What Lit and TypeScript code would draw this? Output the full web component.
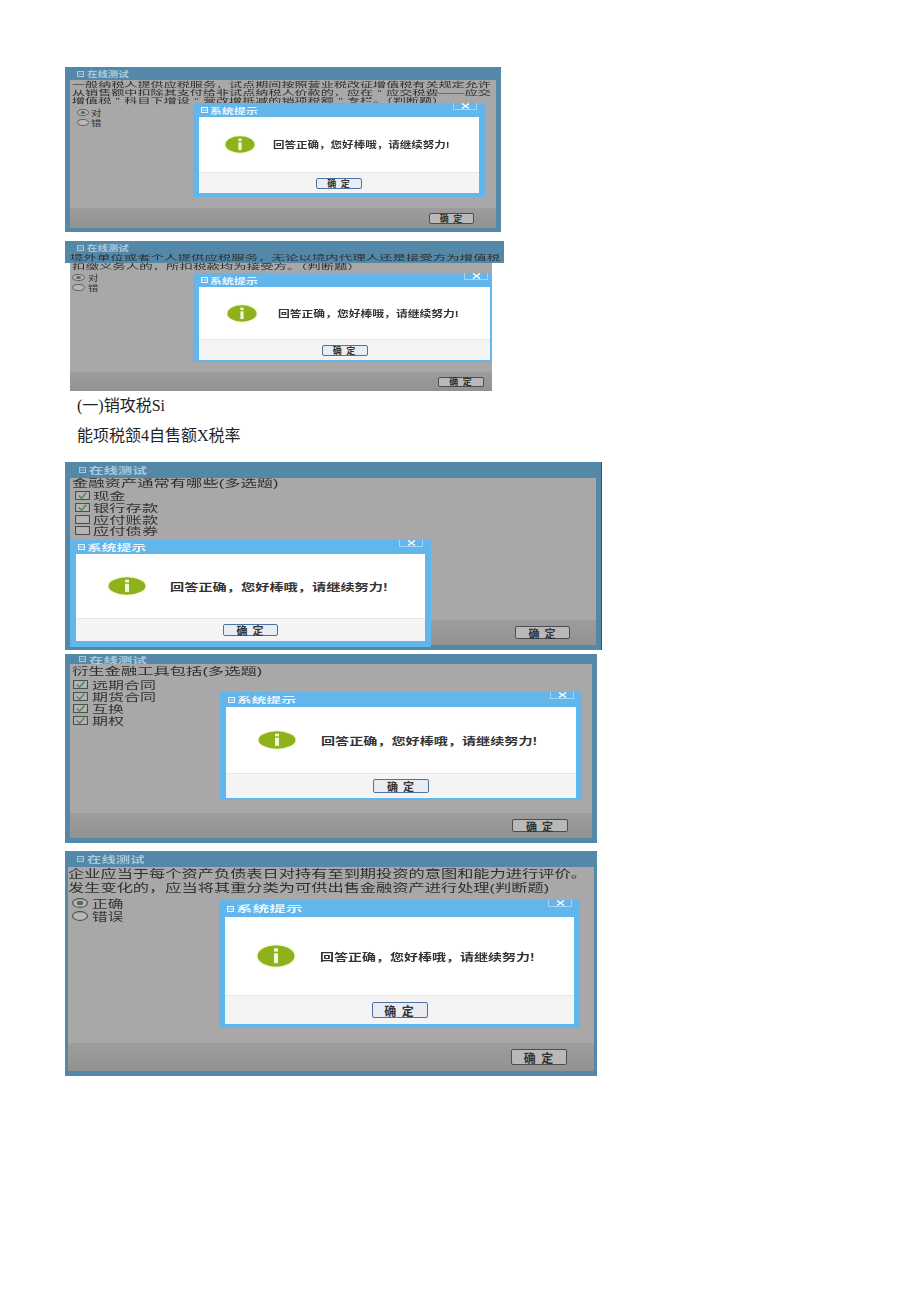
import { LitElement, html, svg, css } from "lit";
import { customElement } from "lit/decorators.js";

type Opt = { label: string; on: boolean };
type Shot = { cls: string; lines: string[]; kind: "radio" | "check"; opts: Opt[] };

const MSG = "回答正确，您好棒哦，请继续努力!";

const shots: Shot[] = [
  {
    cls: "s1",
    lines: [
      "一般纳税人提供应税服务，试点期间按照营业税改征增值税有关规定允许",
      "从销售额中扣除其支付给非试点纳税人价款的，应在“应交税费——应交",
      "增值税”科目下增设“营改增抵减的销项税额”专栏。（判断题）",
    ],
    kind: "radio",
    opts: [{ label: "对", on: true }, { label: "错", on: false }],
  },
  {
    cls: "s3",
    lines: ["金融资产通常有哪些(多选题)"],
    kind: "check",
    opts: [
      { label: "现金", on: true },
      { label: "银行存款", on: true },
      { label: "应付账款", on: false },
      { label: "应付债券", on: false },
    ],
  },
  {
    cls: "s4",
    lines: ["衍生金融工具包括(多选题)"],
    kind: "check",
    opts: [
      { label: "远期合同", on: true },
      { label: "期货合同", on: true },
      { label: "互换", on: true },
      { label: "期权", on: true },
    ],
  },
  {
    cls: "s5",
    lines: [
      "企业应当于每个资产负债表日对持有至到期投资的意图和能力进行评价。",
      "发生变化的，应当将其重分类为可供出售金融资产进行处理(判断题)",
    ],
    kind: "radio",
    opts: [{ label: "正确", on: true }, { label: "错误", on: false }],
  },
];

@customElement("app-root")
export class AppRoot extends LitElement {
  static styles = css`
    :host {
      display: block;
      width: 920px;
      min-height: 1301px;
      background: #fff;
      font-family: "Liberation Sans", "Noto Sans CJK SC", sans-serif;
      color: #2b2b2b;
    }
    .page {
      display: flex;
      flex-direction: column;
      align-items: flex-start;
      padding: 67px 0 0 65px;
    }
    .win {
      position: relative;
      box-sizing: border-box;
      display: flex;
      flex-direction: column;
      width: var(--w);
      height: var(--h);
      margin-top: var(--mt, 0);
      padding: 0 var(--side) var(--bot);
      background: #5488a9;
      filter: blur(0.7px);
    }
    .s1 { --w: 436px; --h: 165px; --side: 5px; --bot: 4px; --title: 13px; --tpl: 7px; --tfs: 8px; --tsx: 1.3; --dtsx: 1.5; --qfs: 7px; --qlh: 8.1px; --qsx: 1.87; --qpt: 1px; --mpl: 2px; --ofs: 8.5px; --olh: 10px; --osx: 1.22; --ctlw: 12px; --ctlh: 7px; --opl: 5px; --gap: 2px; --optop: 2px; --foot: 20px; --btnr: 22px; --bw: 45px; --bh: 11px; --bfs: 9px; --dl: 128px; --dt: 36px; --dw: 292px; --dh: 94px; --dside: 6px; --dtitle: 14px; --dbot: 4px; --dfoot: 21px; --dbw: 46px; --dbh: 11px; --ipl: 26px; --iw: 30px; --ih: 17px; --mgap: 18px; --mfs: 9px; --msx: 1.28; }
    .s3 { --w: 537px; --h: 188px; --side: 5px; --bot: 5px; --title: 16px; --tpl: 9px; --tfs: 9px; --tsx: 1.6; --dtsx: 1.65; --qfs: 10px; --qlh: 12px; --qsx: 1.63; --qpt: 0px; --mpl: 2px; --ofs: 10px; --olh: 11.7px; --osx: 1.63; --ctlw: 15px; --ctlh: 9px; --opl: 3px; --gap: 3px; --optop: 0px; --foot: 25px; --btnr: 26px; --bw: 55px; --bh: 13px; --bfs: 11px; --dl: 5px; --dt: 78px; --dw: 361px; --dh: 107px; --dside: 6px; --dtitle: 14px; --dbot: 6px; --dfoot: 23px; --dbw: 55px; --dbh: 12px; --ipl: 32px; --iw: 38px; --ih: 18px; --mgap: 24px; --mfs: 10px; --msx: 1.42; margin-top: 11px; border-right: 1px solid #39566a; }
    .s4 { --w: 532px; --h: 189px; --mt: 4px; --side: 5px; --bot: 5px; --title: 10px; --tpl: 9px; --tfs: 8px; --tsx: 1.8; --dtsx: 1.85; --qfs: 10px; --qlh: 12px; --qsx: 1.63; --qpt: 2px; --mpl: 2px; --ofs: 10px; --olh: 12px; --osx: 1.6; --ctlw: 15px; --ctlh: 9px; --opl: 1px; --gap: 4px; --optop: -1px; --foot: 25px; --btnr: 24px; --bw: 56px; --bh: 13px; --bfs: 11px; --dl: 155px; --dt: 38px; --dw: 362px; --dh: 108px; --dside: 6px; --dtitle: 15px; --dbot: 2px; --dfoot: 25px; --dbw: 56px; --dbh: 14px; --ipl: 32px; --iw: 38px; --ih: 18px; --mgap: 25px; --mfs: 10px; --msx: 1.41; }
    .s5 { --w: 532px; --h: 225px; --mt: 8px; --side: 3px; --bot: 5px; --title: 16px; --tpl: 9px; --tfs: 9px; --tsx: 1.6; --dtsx: 1.85; --qfs: 11.5px; --qlh: 13.5px; --qsx: 1.41; --qpt: 1px; --mpl: 0px; --ofs: 11.5px; --olh: 13.5px; --osx: 1.36; --ctlw: 16px; --ctlh: 10px; --opl: 4px; --gap: 4px; --optop: 1px; --foot: 28px; --btnr: 27px; --bw: 56px; --bh: 16px; --bfs: 12px; --dl: 154px; --dt: 49px; --dw: 361px; --dh: 128px; --dside: 6px; --dtitle: 17px; --dbot: 4px; --dfoot: 29px; --dbw: 56px; --dbh: 16px; --ipl: 32px; --iw: 38px; --ih: 22px; --mgap: 25px; --mfs: 10px; --msx: 1.4; }
    .s2 { --side: 0px; --title: 13px; --tpl: 7px; --tfs: 8px; --tsx: 1.3; --dtsx: 1.5; --qfs: 7px; --qlh: 8.1px; --qsx: 1.92; --qpt: 0px; --mpl: 2px; --ofs: 8.5px; --olh: 10px; --osx: 1.22; --ctlw: 13px; --ctlh: 7px; --opl: 0px; --gap: 3px; --optop: 1px; --bw: 46px; --bh: 10px; --bfs: 9px; --dl: 123px; --dt: 10px; --dw: 299px; --dh: 89px; --dside: 6px; --dtitle: 14px; --dbot: 2px; --dfoot: 21px; --dbw: 46px; --dbh: 11px; --ipl: 28px; --iw: 30px; --ih: 17px; --mgap: 21px; --mfs: 9px; --msx: 1.31; }

    .band {
      box-sizing: border-box;
      width: 439px;
      height: 22px;
      margin-top: 9px;
      padding-left: 5px;
      background: #5488a9;
      filter: blur(0.7px);
    }
    .lower {
      position: relative;
      box-sizing: border-box;
      display: flex;
      flex-direction: column;
      width: 422px;
      height: 128px;
      margin-left: 5px;
      background: #a8a8a8;
      filter: blur(0.7px);
    }
    .lower .foot { height: 19px; padding-right: 8px; }

    .title {
      display: flex;
      align-items: center;
      gap: 3px;
      flex: none;
      height: var(--title);
      padding-left: var(--tpl);
      color: #a9c8db;
      font-size: var(--tfs);
      font-weight: 700;
    }
    .title svg { flex: none; width: 7px; height: 6px; }
    .wide {
      display: inline-block;
      white-space: nowrap;
      transform-origin: left center;
    }
    .title .wide { transform: scaleX(var(--tsx)); }
    .body {
      flex: 1;
      display: flex;
      flex-direction: column;
      min-height: 0;
      background: #a8a8a8;
    }
    .main { flex: 1; min-height: 0; padding: var(--qpt) 0 0 var(--mpl); }
    .q {
      display: block;
      font-size: var(--qfs);
      line-height: var(--qlh);
      color: #2e2e2e;
      transform: scaleX(var(--qsx));
    }
    .qm { display: inline-block; width: 1em; text-align: center; }
    .opts { padding-top: var(--optop); }
    .opt {
      display: flex;
      align-items: center;
      gap: var(--gap);
      height: var(--olh);
      padding-left: var(--opl);
      font-size: var(--ofs);
      color: #333;
    }
    .opt .wide { transform: scaleX(var(--osx)); }
    .ctl { flex: none; width: var(--ctlw); height: var(--ctlh); display: block; overflow: visible; }
    .foot {
      flex: none;
      display: flex;
      align-items: center;
      justify-content: flex-end;
      height: var(--foot);
      padding-right: var(--btnr);
      background: linear-gradient(#9d9d9d, #929292);
    }
    .btn {
      box-sizing: border-box;
      display: flex;
      align-items: center;
      justify-content: center;
      width: var(--bw);
      height: var(--bh);
      padding: 0;
      border: 1px solid #4d4d4d;
      border-radius: 2px;
      background: #b9b9b9;
      color: #333;
      font: 700 var(--bfs) "Liberation Sans", "Noto Sans CJK SC", sans-serif;
      letter-spacing: 1px;
      white-space: pre;
    }
    .dlg {
      position: absolute;
      left: var(--dl);
      top: var(--dt);
      box-sizing: border-box;
      display: flex;
      flex-direction: column;
      width: var(--dw);
      height: var(--dh);
      padding: 0 var(--dside) var(--dbot);
      background: #62b6ec;
    }
    .s2 .dlg { padding-right: 2px; }
    .dtitle {
      position: relative;
      flex: none;
      display: flex;
      align-items: center;
      gap: 2px;
      height: var(--dtitle);
      padding-left: 2px;
      color: #eaf6fd;
      font-size: var(--tfs);
      font-weight: 700;
    }
    .dtitle svg.ti { flex: none; width: 7px; height: 6px; }
    .dtitle .wide { transform: scaleX(var(--dtsx)); }
    .x {
      position: absolute;
      right: 2px;
      top: 0;
      width: 24px;
      height: 7px;
      border: 1px solid #a6d6f5;
      border-top: 0;
      box-sizing: border-box;
    }
    .x svg { display: block; margin: 0 auto; width: 9px; height: 6px; }
    .panel { flex: 1; display: flex; flex-direction: column; min-height: 0; background: #fff; }
    .msg {
      flex: 1;
      display: flex;
      align-items: center;
      gap: var(--mgap);
      padding-left: var(--ipl);
      font-size: var(--mfs);
      font-weight: 700;
      color: #333;
      min-height: 0;
    }
    .msg svg { flex: none; width: var(--iw); height: var(--ih); filter: drop-shadow(0 0 1px #dfe98f); }
    .msg .wide { transform: scaleX(var(--msx)); }
    .dfoot {
      flex: none;
      display: flex;
      align-items: center;
      justify-content: center;
      height: var(--dfoot);
      background: #f4f4f4;
      border-top: 1px solid #e6e6e6;
      box-sizing: border-box;
    }
    .dfoot .btn {
      width: var(--dbw);
      height: var(--dbh);
      background: #e9edf1;
      border-color: #4f73a0;
    }
    .note {
      margin: 0 0 0 12px;
      font-family: "Liberation Serif", "Noto Sans CJK SC", serif;
      font-size: 16px;
      line-height: 30px;
      color: #222;
      white-space: nowrap;
    }
  `;

  private line(text: string) {
    const parts = text.split(/([“”])/);
    return html`<span class="q wide">${parts.map((p) =>
      p === "“" || p === "”" ? html`<span class="qm">${p}</span>` : p
    )}</span>`;
  }

  private titleIcon(cls = "") {
    return html`<svg class=${cls} viewBox="0 0 7 6" aria-hidden="true">
      <rect x="0.5" y="0.5" width="6" height="5" fill="none" stroke="currentColor" stroke-width="1" />
      <path d="M0.5 3h6" stroke="currentColor" stroke-width="0.8" />
    </svg>`;
  }

  private ctl(kind: "radio" | "check", on: boolean) {
    if (kind === "radio") {
      return html`<svg class="ctl" viewBox="0 0 16 10" preserveAspectRatio="none" aria-hidden="true">
        <ellipse cx="8" cy="5" rx="7.4" ry="4.4" fill="#b8b8b8" stroke="#4e4e4e" stroke-width="1.1" />
        ${on ? svg`<ellipse cx="8" cy="5" rx="3.2" ry="2.2" fill="#4f754f" />` : ""}
      </svg>`;
    }
    return html`<svg class="ctl" viewBox="0 0 16 10" preserveAspectRatio="none" aria-hidden="true">
      <rect x="0.6" y="0.6" width="14.8" height="8.8" fill="#b4b4b4" stroke="#4a4a4a" stroke-width="1.1" />
      ${on ? svg`<path d="M4 5l3 3 5-6" fill="none" stroke="#4f8a4f" stroke-width="1.6" />` : ""}
    </svg>`;
  }

  private options(s: { kind: "radio" | "check"; opts: Opt[] }) {
    return html`<div class="opts">
      ${s.opts.map(
        (o) => html`<div class="opt">${this.ctl(s.kind, o.on)}<span class="wide">${o.label}</span></div>`
      )}
    </div>`;
  }

  private dialog() {
    return html`<div class="dlg">
      <div class="dtitle">
        ${this.titleIcon("ti")}<span class="wide">系统提示</span>
        <span class="x"><svg viewBox="0 0 9 6" aria-hidden="true"><path d="M1 0.5l7 5M8 0.5l-7 5" stroke="#fff" stroke-width="1.4" /></svg></span>
      </div>
      <div class="panel">
        <div class="msg">
          <svg viewBox="0 0 38 20" preserveAspectRatio="none" aria-hidden="true">
            <ellipse cx="19" cy="10" rx="18.5" ry="9.6" fill="#8fb21c" />
            <rect x="17" y="3" width="4" height="3" fill="#f3f7e2" />
            <rect x="17" y="7.5" width="4" height="9" fill="#f3f7e2" />
          </svg>
          <span class="wide">${MSG}</span>
        </div>
        <div class="dfoot"><button class="btn">确 定</button></div>
      </div>
    </div>`;
  }

  private win(s: Shot) {
    return html`<div class="win ${s.cls}">
      <div class="title">${this.titleIcon()}<span class="wide">在线测试</span></div>
      <div class="body">
        <div class="main">
          ${s.lines.map((l) => this.line(l))}
          ${this.options(s)}
        </div>
        <div class="foot"><button class="btn">确 定</button></div>
      </div>
      ${this.dialog()}
    </div>`;
  }

  render() {
    return html`<div class="page">
      ${this.win(shots[0])}
      <div class="s2">
        <div class="band">
          <div class="title">${this.titleIcon()}<span class="wide">在线测试</span></div>
          ${this.line("境外单位或者个人提供应税服务，无论以境内代理人还是接受方为增值税")}
        </div>
        <div class="lower">
          <div class="main">
            ${this.line("扣缴义务人的，所扣税款均为接受方。（判断题）")}
            ${this.options({ kind: "radio", opts: [{ label: "对", on: true }, { label: "错", on: false }] })}
          </div>
          <div class="foot"><button class="btn">确 定</button></div>
          ${this.dialog()}
        </div>
      </div>
      <p class="note">(一)销攻税Si</p>
      <p class="note">能项税颔4自售额X税率</p>
      ${this.win(shots[1])}
      ${this.win(shots[2])}
      ${this.win(shots[3])}
    </div>`;
  }
}
